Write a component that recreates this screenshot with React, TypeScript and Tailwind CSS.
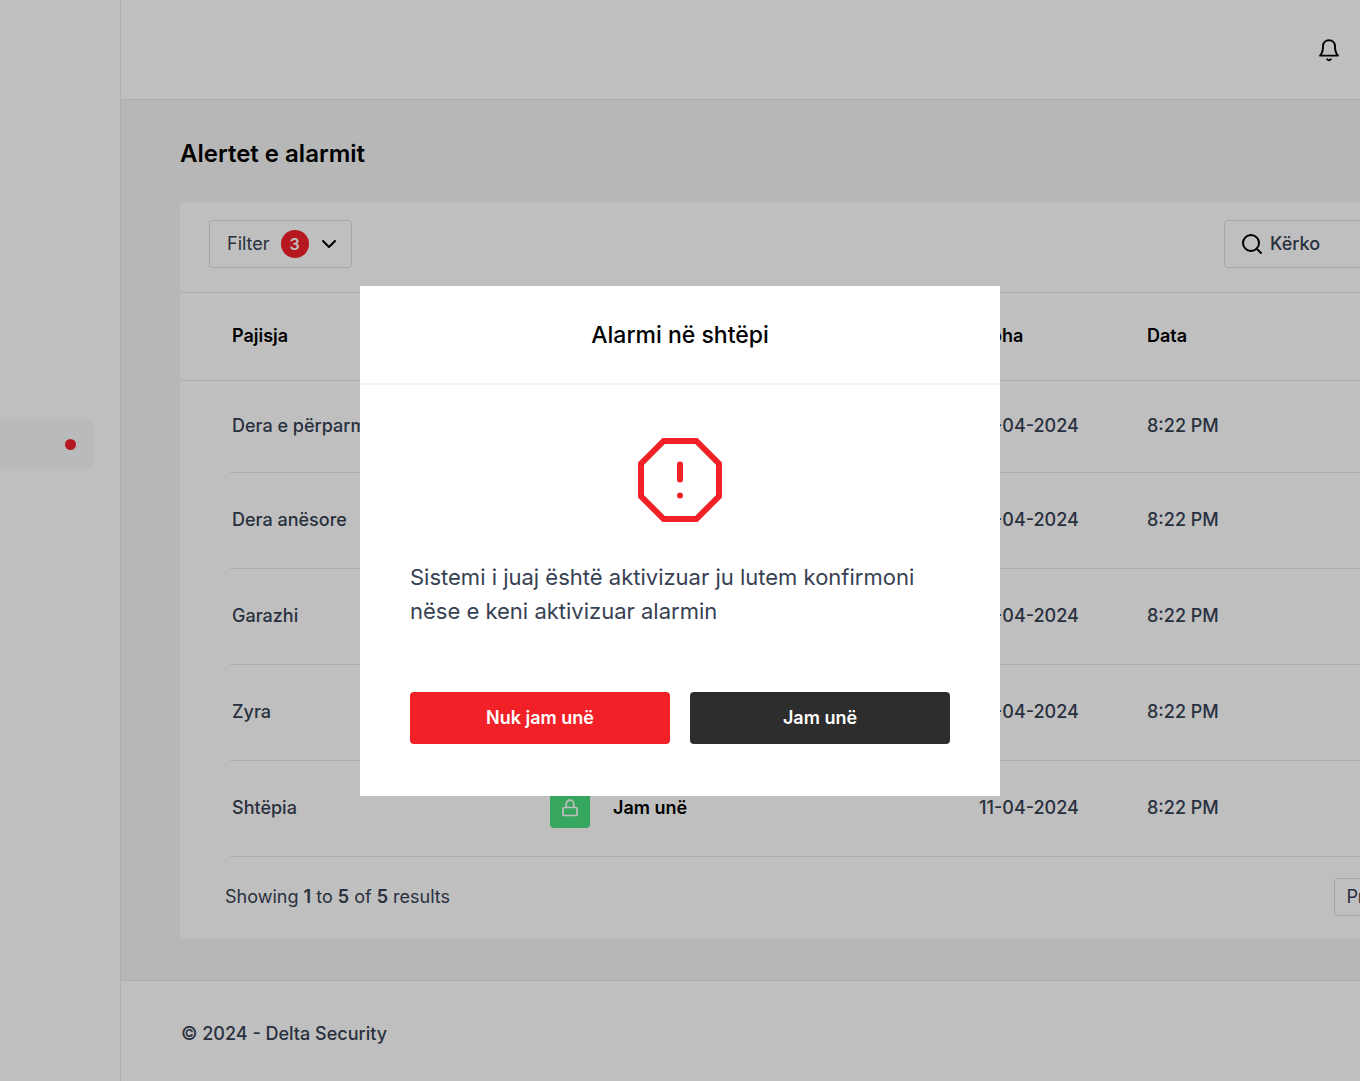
import { ChevronDown, Search } from 'lucide-react';

interface Alert {
  device: string;
  status: string;
  date: string;
  time: string;
}

const alerts: Alert[] = [
  { device: 'Dera e përparme', status: 'Jam unë', date: '11-04-2024', time: '8:22 PM' },
  { device: 'Dera anësore', status: 'Jam unë', date: '11-04-2024', time: '8:22 PM' },
  { device: 'Garazhi', status: 'Jam unë', date: '11-04-2024', time: '8:22 PM' },
  { device: 'Zyra', status: 'Jam unë', date: '11-04-2024', time: '8:22 PM' },
  { device: 'Shtëpia', status: 'Jam unë', date: '11-04-2024', time: '8:22 PM' },
];

const BellIcon = () => (
  <svg
    className="h-6 w-6"
    viewBox="0 0 24 24"
    fill="none"
    stroke="currentColor"
    strokeWidth="1.9"
    strokeLinecap="round"
    strokeLinejoin="round"
  >
    <path d="M18 8.3C18 4.7 15.4 2.2 12 2.2C8.6 2.2 6 4.7 6 8.3C6 14.9 3 17.6 3 17.6H21C21 17.6 18 14.9 18 8.3Z" />
    <path d="M13.8 21.3C13.3 22 12.7 22.2 12 22.2C11.3 22.2 10.7 22 10.2 21.3" />
  </svg>
);

const LockIcon = () => (
  <svg
    className="h-[18px] w-[18px]"
    viewBox="0 0 18 18"
    fill="none"
    stroke="currentColor"
    strokeWidth="1.7"
    strokeLinejoin="round"
  >
    <rect x="2" y="8.5" width="14" height="8" rx="1.2" />
    <path d="M5.2 8.5V5a3.8 3.8 0 0 1 7.6 0v3.5" />
  </svg>
);

const AlertOctagonIcon = () => (
  <svg className="h-[84px] w-[84px]" viewBox="0 0 84 84" fill="none" stroke="#f22128" strokeWidth="6">
    <path d="M25.7 3h32.6L81 25.7v32.6L58.3 81H25.7L3 58.3V25.7z" />
    <path d="M42 26.5v15" strokeLinecap="round" />
    <circle cx="42" cy="57.5" r="3" fill="#f22128" stroke="none" />
  </svg>
);

const Sidebar = () => (
  <aside className="w-[121px] shrink-0 border-r border-gray-200 bg-white pt-[420px]">
    <a
      href="#alerts"
      aria-label="Alertet"
      className="mr-[25px] flex h-12 items-center justify-end rounded-r-lg bg-[#f7f8fa] pr-[19px]"
    >
      <span className="h-[11px] w-[11px] rounded-full bg-[#f22128]" />
    </a>
  </aside>
);

const AlertRow = ({ device, status, date, time }: Alert) => (
  <tr className="h-24 first:h-[92px]">
    <td />
    <td className="border-b border-gray-200 pl-0.5">{device}</td>
    <td className="border-b border-gray-200">
      <div className="flex items-center gap-[23px]">
        <button
          type="button"
          aria-label="Blloko"
          className="flex h-10 w-10 items-center justify-center rounded bg-[#4ade7e] text-white"
        >
          <LockIcon />
        </button>
        <span className="font-semibold text-black">{status}</span>
      </div>
    </td>
    <td className="border-b border-gray-200">{date}</td>
    <td className="border-b border-gray-200">{time}</td>
    <td />
  </tr>
);

const AlertsCard = () => (
  <section className="w-[1320px] rounded bg-white">
    <div className="flex items-center justify-between border-b border-gray-200 pt-[18px] pr-7 pb-6 pl-[29px]">
      <button
        type="button"
        className="flex h-12 w-[143px] items-center rounded border border-[#dcdcde] pl-[17px] text-lg"
      >
        Filter
        <span className="ml-[11px] flex h-7 w-7 items-center justify-center rounded-full bg-[#f22128] text-base font-semibold text-white">
          3
        </span>
        <ChevronDown className="ml-2 h-6 w-6 text-black" />
      </button>
      <label className="flex h-12 w-[248px] items-center gap-1.5 rounded border border-[#dcdcde] pl-[15px]">
        <Search className="h-6 w-6 shrink-0 text-black" />
        <input
          type="search"
          aria-label="Kërko"
          placeholder="Kërko"
          className="w-full min-w-0 text-lg font-medium outline-none placeholder:text-gray-700"
        />
      </label>
    </div>
    <table className="w-full table-fixed text-left text-lg font-medium">
      <colgroup>
        <col className="w-[50px]" />
        <col className="w-80" />
        <col className="w-[429px]" />
        <col className="w-[168px]" />
        <col />
        <col className="w-[50px]" />
      </colgroup>
      <thead>
        <tr className="h-[87px] border-b border-gray-200 text-black">
          <td />
          <th className="pl-0.5 font-semibold">Pajisja</th>
          <th className="font-semibold">Veprimi</th>
          <th className="font-semibold">Koha</th>
          <th className="font-semibold">Data</th>
          <td />
        </tr>
      </thead>
      <tbody>
        {alerts.map((alert) => (
          <AlertRow key={alert.device} {...alert} />
        ))}
      </tbody>
    </table>
    <div className="flex h-[81px] items-center justify-between pr-7 pl-[45px] text-lg">
      <p>
        Showing <b className="font-semibold">1</b> to <b className="font-semibold">5</b> of{' '}
        <b className="font-semibold">5</b> results
      </p>
      <div className="flex w-[138px] gap-3">
        <button type="button" className="h-[38px] flex-1 rounded border border-[#dcdcde]">
          Prev
        </button>
        <button type="button" className="h-[38px] flex-1 rounded border border-[#dcdcde]">
          Next
        </button>
      </div>
    </div>
  </section>
);

const AlarmDialog = () => (
  <div className="fixed inset-0 flex items-center justify-center bg-black/25">
    <div role="dialog" aria-modal="true" aria-labelledby="alarm-title" className="w-[640px] bg-white">
      <h2
        id="alarm-title"
        className="border-b-2 border-gray-100 pt-8 pb-[31px] text-center text-[23px] leading-[34px] font-medium text-black"
      >
        Alarmi në shtëpi
      </h2>
      <div className="flex flex-col px-[50px] pt-[53px] pb-[52px]">
        <div className="flex justify-center">
          <AlertOctagonIcon />
        </div>
        <p className="mt-[38px] text-[22px] leading-[34px]">
          Sistemi i juaj është aktivizuar ju lutem konfirmoni nëse e keni aktivizuar alarmin
        </p>
        <div className="mt-16 grid grid-cols-2 gap-5 text-lg font-semibold text-white">
          <button type="button" className="h-[52px] rounded bg-[#f22128]">
            Nuk jam unë
          </button>
          <button type="button" className="h-[52px] rounded bg-[#2d2d2d]">
            Jam unë
          </button>
        </div>
      </div>
    </div>
  </div>
);

export default function App() {
  return (
    <div className="flex min-h-screen overflow-hidden bg-white font-['Inter',sans-serif] text-gray-700">
      <Sidebar />
      <div className="flex min-w-0 flex-1 flex-col">
        <header className="flex h-[100px] shrink-0 items-center justify-end border-b border-gray-200 pr-[19px]">
          <button type="button" aria-label="Njoftimet" className="text-black">
            <BellIcon />
          </button>
        </header>
        <main className="overflow-hidden bg-[#f5f5f5] pt-[37px] pb-[42px] pl-[59px]">
          <h1 className="mb-[31px] text-2xl leading-[34px] font-semibold text-black">Alertet e alarmit</h1>
          <AlertsCard />
        </main>
        <footer className="border-t border-gray-200 py-9 pl-[60px] text-lg leading-[34px] font-medium">
          © 2024 - Delta Security
        </footer>
      </div>
      <AlarmDialog />
    </div>
  );
}
